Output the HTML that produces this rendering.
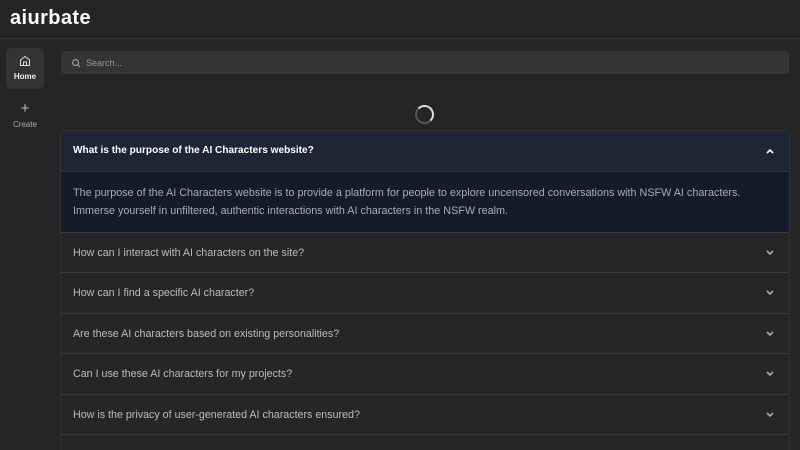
<!DOCTYPE html>
<html><head><style>
*{box-sizing:border-box;margin:0;padding:0}
html,body{width:800px;height:450px;overflow:hidden}
body{background:#252525;font-family:"Liberation Sans",sans-serif;color:#ddd;position:relative}
.top{height:39px;border-bottom:1px solid #333;}
.logo{position:absolute;left:10px;top:7px;font-size:20px;font-weight:bold;color:#fff;letter-spacing:0.4px}
.nav{position:absolute;left:6px;top:48px;width:38px;height:41px;background:#333;border-radius:5px;text-align:center;font-size:8px;font-weight:bold;color:#eee}
.nav2{position:absolute;left:6px;top:100px;width:38px;text-align:center;font-size:8px;color:#aaa}
.search{position:absolute;left:61px;top:51px;width:728px;height:23px;background:#343434;border-radius:4px;font-size:9px;color:#999;padding:7px 0 0 25px}
.spin{position:absolute;left:415px;top:105px;width:19px;height:19px;border-radius:50%;border:2px solid #555;border-top-color:#ddd;border-right-color:#ddd}
.acc{position:absolute;left:60px;top:130px;width:730px;height:320px;border:1px solid #333;border-bottom:none;border-radius:5px 5px 0 0;overflow:hidden}
.h{height:40.5px;padding:14px 12px;font-size:10.7px;color:#bbb;border-top:1px solid #3a3a3a;position:relative;background:#262626}
.h.open{background:#1e2535;color:#fff;font-weight:bold;font-size:10.1px;border-top:none;border-bottom:1px solid #2c3446}
.h svg{position:absolute;right:14px;top:16px}
.b{height:60px;background:#141b2b;padding:12px 12px;font-size:10.8px;line-height:18px;color:#aab}
</style></head><body>
<div class="top"></div>
<div class="logo">aiurbate</div>
<div class="nav"><svg width="12" height="12" viewBox="0 0 24 24" style="margin-top:7px" fill="none" stroke="#ddd" stroke-width="2"><path d="M3 10l9-7 9 7v11H3z M9 21v-7h6v7"/></svg><div style="margin-top:3px">Home</div></div>
<div class="nav2"><div style="font-size:15px;color:#bbb">+</div><div style="margin-top:3px">Create</div></div>
<div class="search"><svg width="10" height="10" viewBox="0 0 24 24" style="position:absolute;left:10px;top:7px" fill="none" stroke="#aaa" stroke-width="2.5"><circle cx="11" cy="11" r="7"/><path d="M16 16l5 5"/></svg>Search...</div>
<div class="spin"></div>
<div class="acc">
<div class="h open">What is the purpose of the AI Characters website?<svg width="10" height="8" viewBox="0 0 10 8"><path d="M2 6l3-3 3 3" stroke="#fff" stroke-width="1.6" fill="none"/></svg></div>
<div class="b">The purpose of the AI Characters website is to provide a platform for people to explore uncensored conversations with NSFW AI characters.<br>Immerse yourself in unfiltered, authentic interactions with AI characters in the NSFW realm.</div>
<div class="h">How can I interact with AI characters on the site?<svg width="10" height="8" viewBox="0 0 10 8"><path d="M2 2l3 3 3-3" stroke="#aaa" stroke-width="1.6" fill="none"/></svg></div>
<div class="h">How can I find a specific AI character?<svg width="10" height="8" viewBox="0 0 10 8"><path d="M2 2l3 3 3-3" stroke="#aaa" stroke-width="1.6" fill="none"/></svg></div>
<div class="h">Are these AI characters based on existing personalities?<svg width="10" height="8" viewBox="0 0 10 8"><path d="M2 2l3 3 3-3" stroke="#aaa" stroke-width="1.6" fill="none"/></svg></div>
<div class="h">Can I use these AI characters for my projects?<svg width="10" height="8" viewBox="0 0 10 8"><path d="M2 2l3 3 3-3" stroke="#aaa" stroke-width="1.6" fill="none"/></svg></div>
<div class="h">How is the privacy of user-generated AI characters ensured?<svg width="10" height="8" viewBox="0 0 10 8"><path d="M2 2l3 3 3-3" stroke="#aaa" stroke-width="1.6" fill="none"/></svg></div>
<div class="h"></div>
</div>
</body></html>
